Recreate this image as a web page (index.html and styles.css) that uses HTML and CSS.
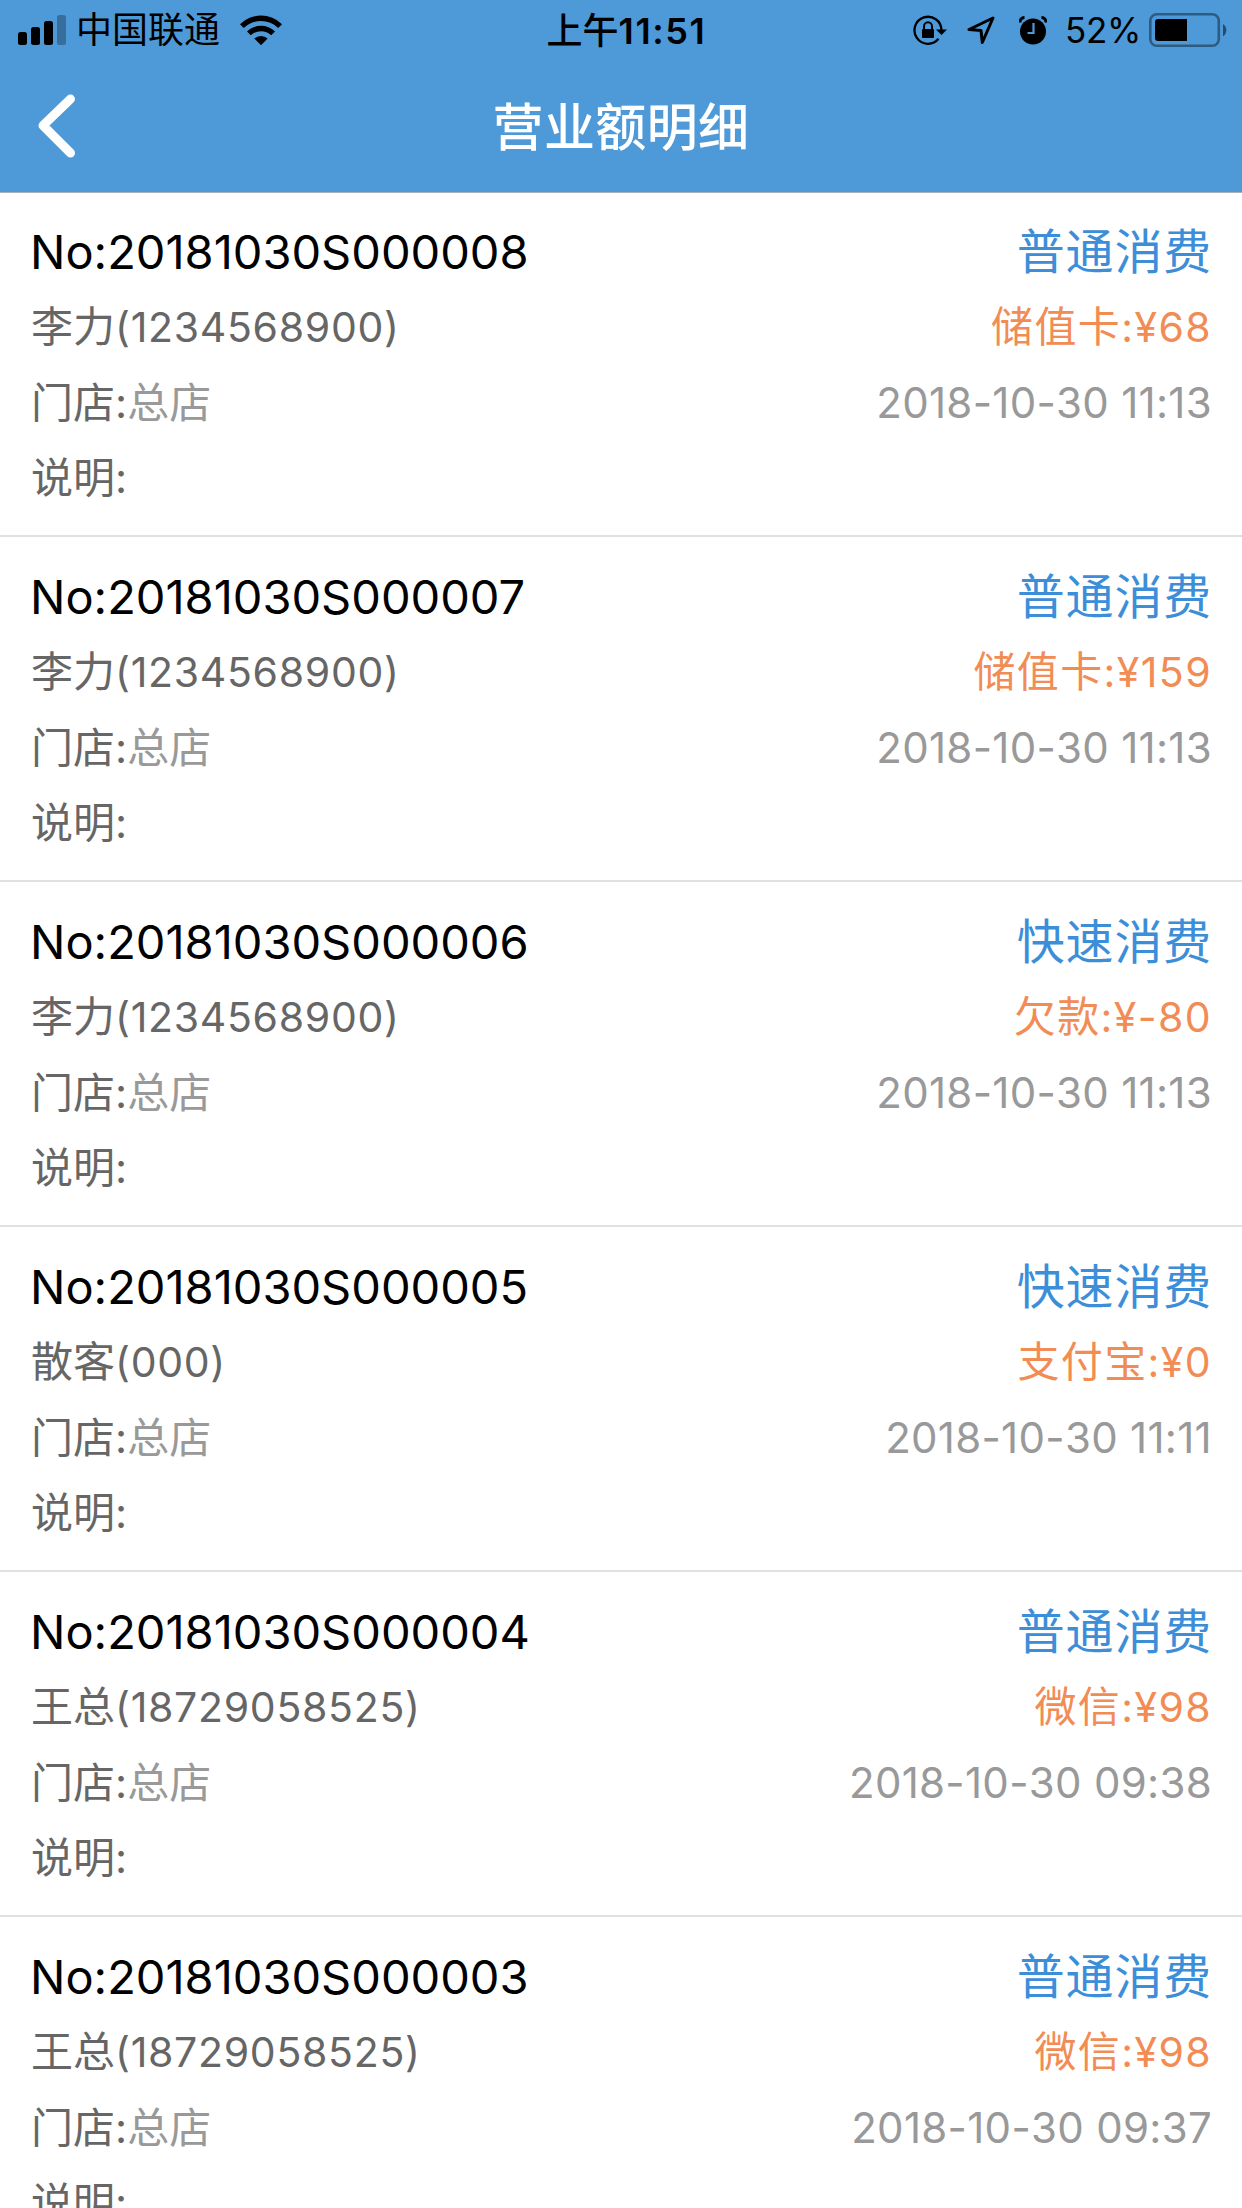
FILE: index.html
```html
<!doctype html>
<html lang="zh-CN">
  <head>
    <meta charset="utf-8">
    <meta name="viewport" content="width=device-width, initial-scale=1.0">
    <title>营业额明细</title>
    <link rel="stylesheet" href="styles.css">
  </head>
  <body>
    <header class="header">
      <div class="status-bar">
        <div class="status-left">
          <svg class="signal" width="48" height="30" viewBox="0 0 48 30">
            <rect x="0" y="17" width="9" height="13" rx="2.5"/>
            <rect x="13" y="12" width="9" height="18" rx="2.5"/>
            <rect x="26" y="6" width="9" height="24" rx="2.5"/>
            <rect x="39" y="0" width="9" height="30" rx="2.5" opacity="0.28"/>
          </svg>
          <span class="carrier">中国联通</span>
          <svg class="wifi" width="42" height="30" viewBox="0 0 42 30">
            <path d="M0 9.2A30 30 0 0 1 42 9.2L38.2 13A24.5 24.5 0 0 0 3.8 13Z"/>
            <path d="M7 16.5A20 20 0 0 1 35 16.5L31.2 20.3A14.6 14.6 0 0 0 10.8 20.3Z"/>
            <path d="M14.3 23.6A9.8 9.8 0 0 1 27.7 23.6L21 30.2Z"/>
          </svg>
        </div>
        <div class="status-time">上午<b>11:51</b></div>
        <div class="status-right">
          <!-- rotation lock -->
          <svg class="lock" width="35" height="31" viewBox="0 0 35 31">
            <path d="M28.5 15A13.5 13.5 0 1 0 25.5 23.8" fill="none" stroke="#000" stroke-width="2.3"/>
            <path d="M23 14.5H34L28.5 20Z"/>
            <rect x="9" y="14" width="12" height="9" rx="1"/>
            <path d="M11 14.5V11.5a4 4.2 0 0 1 8 0V14.5" fill="none" stroke="#000" stroke-width="2"/>
          </svg>
          <!-- location -->
          <svg class="arrow" width="28" height="28" viewBox="0 0 28 28">
            <path d="M26 2L2 13.5L14 14.5L15.3 26.5Z" fill="none" stroke="#000" stroke-width="3" stroke-linejoin="round"/>
          </svg>
          <!-- alarm -->
          <svg class="alarm" width="28" height="29" viewBox="0 0 28 29">
            <circle cx="14" cy="15.5" r="13"/>
            <path d="M1.2 6.5V4.5Q2.5 1.5 5.5 1.5M26.8 6.5V4.5Q25.5 1.5 22.5 1.5" fill="none" stroke="#000" stroke-width="2.8"/>
            <path d="M14.5 7V17H8.5" fill="none" stroke="#4e99d7" stroke-width="2.2"/>
          </svg>
          <span class="percent">52%</span>
          <svg class="battery" width="78" height="34" viewBox="0 0 78 34">
            <rect x="1.3" y="1.3" width="68.5" height="31.4" rx="6.5" fill="none" stroke="#000" stroke-opacity="0.4" stroke-width="2.6"/>
            <path d="M38 6H9a3 3 0 0 0-3 3V25a3 3 0 0 0 3 3H38Z"/>
            <path d="M74 11a7.5 7.5 0 0 1 0 12.5Z" opacity="0.5"/>
          </svg>
        </div>
      </div>
      <div class="nav-bar">
        <svg class="back" width="38" height="64" viewBox="0 0 38 64">
          <path d="M32.5 5L5 31.5L32.5 59" fill="none" stroke="#fff" stroke-width="9" stroke-linecap="round" stroke-linejoin="round"/>
        </svg>
        <h1 class="title">营业额明细</h1>
      </div>
    </header>

    <ul class="list">
      <li class="item">
        <div class="line first"><span class="no">No:20181030S000008</span><span class="type">普通消费</span></div>
        <div class="line second"><span class="name">李力<i>(1234568900)</i></span><span class="pay">储值卡<i>:¥68</i></span></div>
        <div class="line"><span class="label">门店<i>:</i><em>总店</em></span><span class="date">2018-10-30 11:13</span></div>
        <div class="line"><span class="label">说明<i>:</i></span></div>
      </li>
      <li class="item">
        <div class="line first"><span class="no">No:20181030S000007</span><span class="type">普通消费</span></div>
        <div class="line second"><span class="name">李力<i>(1234568900)</i></span><span class="pay">储值卡<i>:¥159</i></span></div>
        <div class="line"><span class="label">门店<i>:</i><em>总店</em></span><span class="date">2018-10-30 11:13</span></div>
        <div class="line"><span class="label">说明<i>:</i></span></div>
      </li>
      <li class="item">
        <div class="line first"><span class="no">No:20181030S000006</span><span class="type">快速消费</span></div>
        <div class="line second"><span class="name">李力<i>(1234568900)</i></span><span class="pay">欠款<i>:¥-80</i></span></div>
        <div class="line"><span class="label">门店<i>:</i><em>总店</em></span><span class="date">2018-10-30 11:13</span></div>
        <div class="line"><span class="label">说明<i>:</i></span></div>
      </li>
      <li class="item">
        <div class="line first"><span class="no">No:20181030S000005</span><span class="type">快速消费</span></div>
        <div class="line second"><span class="name">散客<i>(000)</i></span><span class="pay">支付宝<i>:¥0</i></span></div>
        <div class="line"><span class="label">门店<i>:</i><em>总店</em></span><span class="date">2018-10-30 11:11</span></div>
        <div class="line"><span class="label">说明<i>:</i></span></div>
      </li>
      <li class="item">
        <div class="line first"><span class="no">No:20181030S000004</span><span class="type">普通消费</span></div>
        <div class="line second"><span class="name">王总<i>(18729058525)</i></span><span class="pay">微信<i>:¥98</i></span></div>
        <div class="line"><span class="label">门店<i>:</i><em>总店</em></span><span class="date">2018-10-30 09:38</span></div>
        <div class="line"><span class="label">说明<i>:</i></span></div>
      </li>
      <li class="item">
        <div class="line first"><span class="no">No:20181030S000003</span><span class="type">普通消费</span></div>
        <div class="line second"><span class="name">王总<i>(18729058525)</i></span><span class="pay">微信<i>:¥98</i></span></div>
        <div class="line"><span class="label">门店<i>:</i><em>总店</em></span><span class="date">2018-10-30 09:37</span></div>
        <div class="line"><span class="label">说明<i>:</i></span></div>
      </li>
    </ul>
  </body>
</html>
```
FILE: styles.css
```css
* {
  box-sizing: border-box;
}

body {
  margin: 0;
  height: 2208px;
  overflow: hidden;
  background: #fff;
  font-family: Inter, "Noto Sans CJK SC", sans-serif;
  font-size: 42px;
}

i, em {
  font-style: normal;
}

/* header */

.header {
  position: relative;
  height: 192px;
  background: #4e99d7;
  box-shadow: 0 1px 0 #a9b0b6;
}

.status-bar {
  display: grid;
  grid-template-columns: 1fr auto 1fr;
  height: 60px;
  padding: 0 15px 0 18px;
  font-size: 36px;
  line-height: 62px;
}

.status-left,
.status-right {
  display: flex;
  align-items: center;
  height: 60px;
}

.status-right {
  justify-content: flex-end;
}

.carrier {
  margin: 0 20px 0 10px;
}

.status-time {
  margin-left: 8px;
  font-weight: 500;
}

.status-time b {
  font-weight: 600;
  letter-spacing: 1.6px;
  font-kerning: none;
}

.arrow {
  margin-left: 19px;
}

.alarm {
  margin-left: 24px;
}

.percent {
  margin: 0 8px 0 18px;
  font-size: 35px;
  letter-spacing: -0.3px;
}

.nav-bar {
  display: grid;
  grid-template-columns: 90px 1fr 90px;
  align-items: center;
  height: 132px;
  padding: 0 38px;
}

.title {
  margin: 0;
  padding-bottom: 4px;
  color: #fff;
  font-size: 51px;
  font-weight: 500;
  letter-spacing: 0.4px;
  text-align: center;
}

/* list */

.list {
  margin: 0;
  padding: 0;
  list-style: none;
}

.item {
  height: 345px;
  padding: 22px 30px 0;
  border-bottom: 2px solid #e1e1e1;
}

.line {
  display: flex;
  justify-content: space-between;
  height: 75px;
  line-height: 75px;
}

.first {
  line-height: 76px;
}

.second {
  height: 76px;
}

.no {
  color: #000;
  font-size: 47px;
}

.type {
  color: #3c8ed9;
  font-size: 48px;
  letter-spacing: 0.8px;
}

.name,
.label {
  padding-left: 1px;
  color: #666;
}

.name i,
.pay i {
  font-size: 41px;
}

.name i {
  letter-spacing: 0.7px;
}

.pay {
  color: #f28c55;
  letter-spacing: 1.4px;
}

.label em,
.date {
  color: #999;
}

.date {
  font-size: 42px;
  letter-spacing: 0.3px;
  font-kerning: none;
}
```
